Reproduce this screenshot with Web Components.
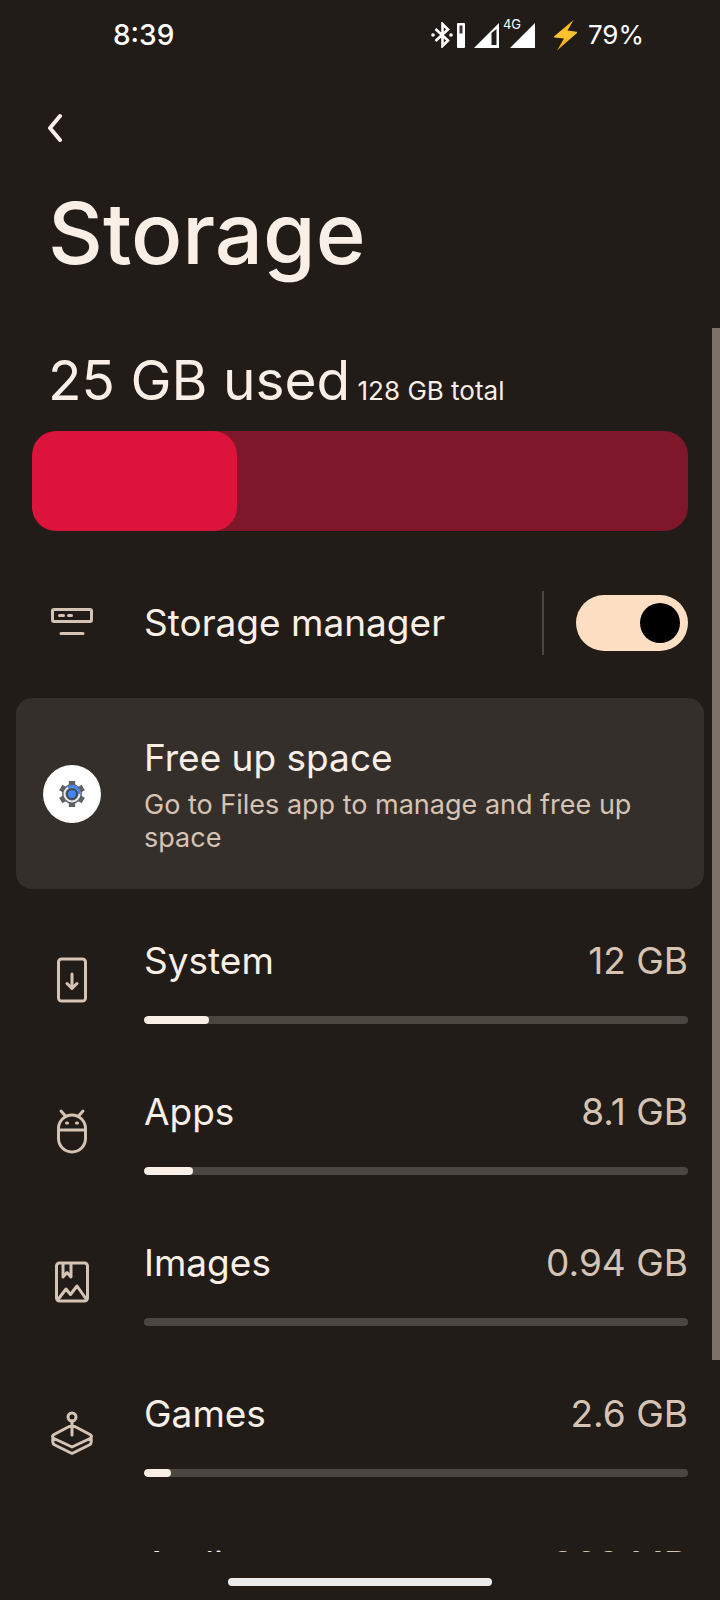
<!DOCTYPE html>
<html lang="en">
<head>
<meta charset="utf-8">
<meta name="viewport" content="width=device-width, initial-scale=1">
<title>Storage</title>
<style>
  html, body { height: 100%; margin: 0; }
  body {
    --bg: #211c18;
    --fg: #f9efe6;
    --muted: #d5c3b4;
    --card: #352f2b;
    --track: #4b4640;
    --accent: #dc143c;
    --accent-dim: #7e1729;
    --switch: #ffdfc3;
    background: var(--bg);
    color: var(--fg);
    font-family: Inter, Roboto, sans-serif;
    overflow: hidden;
  }
</style>
</head>
<body>
<storage-screen></storage-screen>

<script>
const ICONS = {
  drive: '<rect x="4.5" y="10.5" width="39" height="12" rx="1.5"/><path d="M11.5 16.500h4M20.500 16.500h3M13 34.500h22"/>',
  system: '<rect x="10.500" y="2" width="27" height="42" rx="3"/><path d="M24 17v14M19 26.500l5 5 5-5"/>',
  apps: '<path d="M10.500 20.500a13.500 13.500 0 0 1 27 0v10a13.500 13.500 0 0 1-27 0zM10.500 22h27M13 3l4 4.500M35 3l-4 4.500"/><path d="M18.500 15h1M28.500 15h1"/>',
  images: '<rect x="8.500" y="4" width="31" height="38" rx="3"/><path d="M15 4.500v13.500l4-4.500 4 4.500V4.500M10 40.500l8-10.500 4.500 5.500 6.500-8.500L38.500 40.500"/>',
  games: '<circle cx="24" cy="7" r="4"/><path d="M24 11v14M24 15l-18 9.500q-3 2 0 4L24 37l18-8.500q3-2 0-4zM4.800 27v5q0 2 2 3L24 43.500 41.200 35q2-1 2-3v-5"/>'
};

function define(name, markup, setup) {
  const template = document.createElement('template');
  template.innerHTML = markup;
  customElements.define(name, class extends HTMLElement {
    constructor() {
      super();
      this.attachShadow({ mode: 'open' }).append(template.content.cloneNode(true));
    }
    connectedCallback() { if (setup) setup(this, this.shadowRoot); }
  });
}

define('line-icon', `
  <style>
    :host { display: block; width: 48px; height: 48px; color: var(--muted); }
    svg { display: block; width: 100%; height: 100%; fill: none; stroke: currentColor; stroke-width: 3; stroke-linecap: round; stroke-linejoin: round; }
  </style>
  <svg viewBox="0 0 48 48" aria-hidden="true"></svg>`,
  (host, root) => { root.querySelector('svg').innerHTML = ICONS[host.getAttribute('name')]; });

define('status-bar', `
  <style>
    :host { display: flex; justify-content: space-between; align-items: center; height: 70px; padding: 0 76px 0 113px; color: #fff; font-size: 28px; line-height: 34px; font-weight: 500; flex: none; }
    .icons { display: flex; align-items: center; }
    svg { display: block; }
    .net { position: relative; margin-left: 11px; }
    .net span { position: absolute; left: -7px; top: -4px; font-size: 13px; line-height: 13px; font-weight: 400; }
    .bolt { margin: 0 10px 0 18px; }
    .level { font-size: 26px; font-weight: 400; }
  </style>
  <time>8:39</time>
  <div class="icons">
    <svg width="36" height="26" viewBox="0 0 36 26" aria-hidden="true">
      <path d="M4.500 7L17 18.500 11.500 24V2L17 7.500 4.500 19" fill="none" stroke="#fff" stroke-width="2.600"/>
      <circle cx="2" cy="13" r="1.800" fill="#fff"/><circle cx="20" cy="13" r="1.800" fill="#fff"/>
      <rect x="26" y="1" width="8" height="25" rx="1" fill="#fff"/><rect x="28.500" y="3.500" width="3" height="8" fill="#3a3532"/>
    </svg>
    <svg width="32" height="26" viewBox="0 0 32 26" aria-hidden="true"><path d="M7 26L32 1v25z" fill="#fff"/><path d="M24.500 11l5-4v16h-5z" fill="#211c18"/></svg>
    <div class="net"><span>4G</span><svg width="25" height="26" viewBox="0 0 25 26" aria-hidden="true"><path d="M0 26L25 1v25z" fill="#fff"/></svg></div>
    <svg class="bolt" width="25" height="32" viewBox="0 0 25 32" aria-hidden="true">
      <defs><linearGradient id="g" x1="0" y1="0" x2="0" y2="1"><stop offset="0" stop-color="#feb804"/><stop offset=".5" stop-color="#fdc431"/><stop offset="1" stop-color="#f8a010"/></linearGradient></defs>
      <path d="M20.500 1L1 17.500q-.5 1 .5 1L11 19.500 4 31.500 24 14q.5-1-.5-1.200L14.500 11.500z" fill="url(#g)"/>
    </svg>
    <span class="level">79%</span>
  </div>`);

define('page-header', `
  <style>
    :host { display: block; padding: 26px 48px 0; flex: none; }
    button { display: block; width: 48px; height: 64px; margin: 0; padding: 0; border: 0; background: none; color: inherit; }
    svg { display: block; }
    h1 { margin: 24px 0 0; font-size: 85px; line-height: 100px; font-weight: 500; }
  </style>
  <button type="button" aria-label="Back"><svg width="16" height="64" viewBox="0 0 16 64" fill="none" stroke="currentColor" stroke-width="4" stroke-linecap="round" stroke-linejoin="round"><path d="M12 20L2 32l10 12"/></svg></button>
  <h1><slot></slot></h1>`);

define('usage-summary', `
  <style>
    :host { display: block; padding: 0 32px; }
    p { margin: 0; padding-left: 16px; font-size: 26px; line-height: 34px; }
    strong { font-size: 55px; line-height: 72px; font-weight: 400; }
    .bar { height: 100px; margin-top: 15px; border-radius: 24px; background: var(--accent-dim); overflow: hidden; }
    .fill { height: 100%; border-radius: 24px; background: var(--accent); }
  </style>
  <p><strong><slot name="used"></slot></strong> <slot name="total"></slot></p>
  <div class="bar" role="progressbar" aria-label="Storage used"><div class="fill"></div></div>`,
  (host, root) => { root.querySelector('.fill').style.width = host.getAttribute('percent') + '%'; });

define('switch-row', `
  <style>
    :host { display: flex; align-items: center; height: 64px; margin: 60px 32px 43px 48px; }
    label { flex: 1; margin-left: 48px; font-size: 37px; line-height: 46px; }
    .rule { width: 2px; height: 64px; margin-right: 32px; background: var(--track); }
    input { appearance: none; flex: none; width: 112px; height: 56px; margin: 0; padding: 8px; border-radius: 28px; background: var(--track); display: flex; }
    input::before { content: ""; width: 40px; height: 40px; border-radius: 50%; background: #000; }
    input:checked { background: var(--switch); justify-content: flex-end; }
  </style>
  <line-icon name="drive"></line-icon>
  <label for="toggle"><slot></slot></label>
  <span class="rule"></span>
  <input id="toggle" type="checkbox" role="switch" checked>`);

define('action-card', `
  <style>
    :host { display: block; margin: 0 16px 17px; }
    a { display: flex; align-items: center; gap: 43px; padding: 36px 60px 35px 27px; border-radius: 16px; background: var(--card); color: inherit; text-decoration: none; }
    svg { display: block; flex: none; }
    h2 { margin: 0 0 6px; font-size: 37px; line-height: 48px; font-weight: 400; }
    p { margin: 0; font-size: 27px; line-height: 33px; color: var(--muted); }
  </style>
  <a href="#files">
    <svg width="58" height="58" viewBox="0 0 58 58" aria-hidden="true">
      <circle cx="29" cy="29" r="29" fill="#fff"/>
      <g fill="#5f6165"><path d="M25.800 16h6.400v26h-6.400z"/>
      <path d="M25.800 16h6.400v26h-6.400z" transform="rotate(60 29 29)"/><path d="M25.800 16h6.400v26h-6.400z" transform="rotate(120 29 29)"/><circle cx="29" cy="29" r="10"/></g>
      <circle cx="29" cy="29" r="7.500" fill="none" stroke="#e8eaed" stroke-width="2"/>
      <path d="M25 22.600A7.500 7.500 0 0 1 36.500 29" fill="none" stroke="#4285f4" stroke-width="2.500"/>
      <circle cx="29" cy="29" r="5.500" fill="#3c4650"/><circle cx="29" cy="29" r="4" fill="#4285f4"/>
    </svg>
    <div><h2><slot name="title"></slot></h2><p><slot name="detail"></slot></p></div>
  </a>`);

define('category-row', `
  <style>
    :host { display: flex; align-items: center; gap: 48px; padding: 32px 32px 33px 48px; }
    .body { flex: 1; }
    .text { display: flex; justify-content: space-between; margin-bottom: 32px; font-size: 37px; line-height: 46px; }
    .size { color: var(--muted); }
    .bar { height: 8px; border-radius: 4px; background: var(--track); overflow: hidden; }
    .fill { height: 100%; border-radius: 4px; background: var(--fg); }
  </style>
  <line-icon></line-icon>
  <div class="body">
    <div class="text"><span><slot></slot></span><span class="size"><slot name="size"></slot></span></div>
    <div class="bar" role="progressbar"><div class="fill"></div></div>
  </div>`,
  (host, root) => {
    const icon = document.createElement('line-icon');
    icon.setAttribute('name', host.getAttribute('icon'));
    root.querySelector('line-icon').replaceWith(icon);
    root.querySelector('.fill').style.width = host.getAttribute('percent') + '%';
    root.querySelector('.bar').setAttribute('aria-label', host.firstChild.textContent);
  });

define('storage-screen', `
  <style>
    :host { display: flex; flex-direction: column; height: 100vh; position: relative; }
    main { flex: 1; min-height: 0; padding-top: 60px; overflow-y: auto; scrollbar-width: none; }
    nav { flex: none; height: 48px; display: flex; align-items: center; justify-content: center; padding-top: 12px; box-sizing: border-box; }
    nav span { width: 264px; height: 8px; border-radius: 4px; background: #ececec; }
    .thumb { position: absolute; right: 0; top: 328px; bottom: 240px; width: 8px; background: #7c7168; }
  </style>
  <status-bar></status-bar>
  <page-header>Storage</page-header>
  <main>
    <usage-summary percent="31.25"><span slot="used">25 GB used</span><span slot="total">128 GB total</span></usage-summary>
    <switch-row>Storage manager</switch-row>
    <action-card><span slot="title">Free up space</span><span slot="detail">Go to Files app to manage and free up space</span></action-card>
    <category-row icon="system" percent="12">System<span slot="size">12 GB</span></category-row>
    <category-row icon="apps" percent="9">Apps<span slot="size">8.1 GB</span></category-row>
    <category-row icon="images" percent="0">Images<span slot="size">0.94 GB</span></category-row>
    <category-row icon="games" percent="5">Games<span slot="size">2.6 GB</span></category-row>
    <category-row icon="images" percent="1">Audio<span slot="size">363 MB</span></category-row>
  </main>
  <nav><span></span></nav>
  <div class="thumb"></div>`);
</script>
</body>
</html>
